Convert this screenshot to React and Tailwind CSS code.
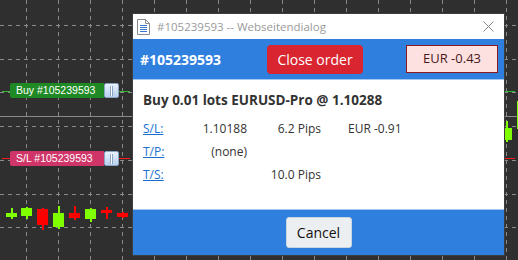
// Chart window with order dialog
const V_LINES = Array.from({ length: 16 }, (_, i) => 26 + i * 32)
const H_LINES = [25, 59, 92, 126, 160, 194, 227]

const CANDLES = [
  { x: 11, top: 213, bottom: 217, hi: 208, lo: 219, up: true },
  { x: 26, top: 208, bottom: 216, hi: 207, lo: 219, up: true },
  { x: 42, top: 209, bottom: 225, hi: 208, lo: 230, up: false },
  { x: 58, top: 213, bottom: 227, hi: 206, lo: 229, up: true },
  { x: 74, top: 213, bottom: 218, hi: 206, lo: 220, up: false },
  { x: 90, top: 209, bottom: 219, hi: 208, lo: 222, up: true },
  { x: 106, top: 210, bottom: 213, hi: 207, lo: 219, up: false },
  { x: 122, top: 213, bottom: 217, hi: 212, lo: 218, up: false },
  { x: 506, top: 128, bottom: 140, hi: 121, lo: 142, up: true },
  { x: 522, top: 101, bottom: 129, hi: 98, lo: 131, up: true },
]

function Chart() {
  return (
    <svg className="absolute inset-0" width="518" height="260" shapeRendering="crispEdges">
      <rect width="518" height="260" fill="#2f2f2f" />
      {V_LINES.map(x => (
        <line key={'v' + x} x1={x + 0.5} y1="0" x2={x + 0.5} y2="260" stroke="#8a8a8a" strokeDasharray="4 4" />
      ))}
      {H_LINES.map(y => (
        <line key={'h' + y} x1="0" y1={y + 0.5} x2="518" y2={y + 0.5} stroke="#8a8a8a" strokeDasharray="4 4" />
      ))}
      <line x1="0" y1="116.5" x2="518" y2="116.5" stroke="#8c8c8c" />
      <line x1="2" y1="91.5" x2="130" y2="91.5" stroke="#2eb82e" />
      <line x1="504" y1="91.5" x2="515" y2="91.5" stroke="#2eb82e" />
      <line x1="2" y1="158.5" x2="130" y2="158.5" stroke="#ff1a1a" />
      <line x1="504" y1="158.5" x2="515" y2="158.5" stroke="#ff1a1a" />
      {CANDLES.map(c => {
        const col = c.up ? '#80ff00' : '#ff0000'
        return (
          <g key={c.x}>
            <rect x={c.x} y={c.hi} width="1.5" height={c.lo - c.hi} fill={col} />
            <rect x={c.x - 5} y={c.top} width="11" height={c.bottom - c.top} fill={col} />
          </g>
        )
      })}
    </svg>
  )
}

function Grip() {
  return (
    <div className="w-[15px] h-[15px] rounded-[2px] border border-[#8aa4c4] bg-gradient-to-b from-[#e8f1fc] to-[#b9d0ee] flex items-center justify-center">
      <div className="w-[3px] h-[10px] bg-white border-x border-[#8aa4c4]" />
    </div>
  )
}

function ChartLabel({ top, text, bg }) {
  return (
    <div className="absolute left-[10px] flex" style={{ top }}>
      <div className={`w-[94px] h-[15px] ${bg} text-white text-[10.5px] leading-[15px] pl-[6px] rounded-l-[2px] font-['Liberation_Sans',sans-serif]`}>
        {text}
      </div>
      <Grip />
    </div>
  )
}

function DocIcon() {
  return (
    <svg width="13" height="16" viewBox="0 0 13 16">
      <path d="M0.5 0.5h8l4 4v11h-12z" fill="#fff" stroke="#8a8a8a" />
      <path d="M8.5 0.5v4h4" fill="none" stroke="#8a8a8a" />
      {[6, 8, 10, 12].map(y => (
        <rect key={y} x="3" y={y} width="7" height="1" fill="#3a78c9" />
      ))}
    </svg>
  )
}

export default function App() {
  return (
    <div className="relative w-[518px] h-[260px] overflow-hidden font-['Open_Sans','Noto_Sans',sans-serif]">
      <Chart />
      <ChartLabel top={83} text="Buy #105239593" bg="bg-[#1f8a24]" />
      <ChartLabel top={151} text="S/L #105239593" bg="bg-[#cf3568]" />

      {/* dialog */}
      <div className="absolute left-[132px] top-[13px] w-[373px] h-[243px] border border-[#3e3e3e] bg-white flex flex-col">
        <div className="h-[25px] flex items-center pl-[4px] pr-[10px] shrink-0">
          <DocIcon />
          <span className="ml-[7px] text-[11.5px] text-[#9a9a9a]">#105239593 -- Webseitendialog</span>
          <svg className="ml-auto" width="11" height="11" viewBox="0 0 11 11">
            <path d="M0.5 0.5l10 10M10.5 0.5l-10 10" stroke="#8a8a8a" strokeWidth="1" />
          </svg>
        </div>

        <div className="h-[41px] shrink-0 bg-[#2f7fdf] border-b border-[#a5c7f0] flex items-center pl-[7px] pr-[6px]">
          <span className="text-white font-bold text-[14px] w-[127px]">#105239593</span>
          <button className="h-[29px] w-[96px] rounded-[4px] bg-[#d9252f] text-white text-[14px]">Close order</button>
          <div className="ml-auto h-[28px] w-[92px] bg-[#fde1e1] border border-[#8b1c1c] text-[#4a1a1a] text-[13px] flex items-center justify-center">
            EUR -0.43
          </div>
        </div>

        <div className="flex-1 px-[10px] pt-[10px] text-[#333] text-[12px]">
          <div className="font-bold text-[13.5px] h-[20px] leading-[20px]">Buy 0.01 lots EURUSD-Pro @ 1.10288</div>
          <div className="mt-[9px] flex flex-col gap-[3px]">
            <div className="flex h-[20px] items-center">
              <a className="w-[40px] text-[#1a6fd1] underline">S/L:</a>
              <span className="w-[64px] text-right">1.10188</span>
              <span className="w-[74px] text-right">6.2 Pips</span>
              <span className="ml-[27px]">EUR -0.91</span>
            </div>
            <div className="flex h-[20px] items-center">
              <a className="w-[40px] text-[#1a6fd1] underline">T/P:</a>
              <span className="w-[64px] text-right">(none)</span>
            </div>
            <div className="flex h-[20px] items-center">
              <a className="w-[40px] text-[#1a6fd1] underline">T/S:</a>
              <span className="w-[64px]" />
              <span className="w-[74px] text-right">10.0 Pips</span>
            </div>
          </div>
        </div>

        <div className="h-[46px] shrink-0 bg-[#2f7fdf] border-t border-[#a5c7f0] flex items-center justify-center">
          <button className="h-[31px] w-[66px] rounded-[3px] bg-[#eceff1] border border-[#c8d4e0] text-[14px] text-[#111]">Cancel</button>
        </div>
      </div>
    </div>
  )
}
